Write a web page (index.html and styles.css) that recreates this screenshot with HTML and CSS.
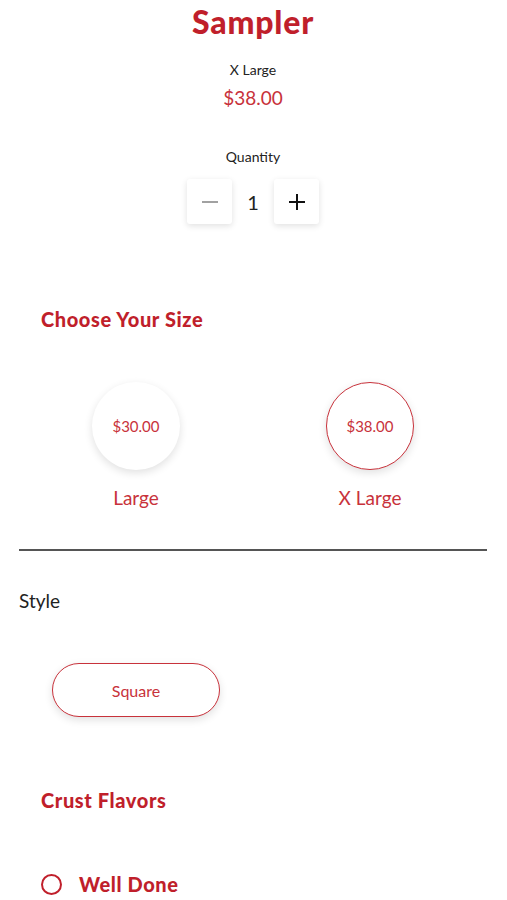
FILE: index.html
```html
<!DOCTYPE html>
<html lang="en">
<head>
    <meta charset="UTF-8">
    <meta name="viewport" content="width=device-width, initial-scale=1.0">
    <title>Sampler</title>
    <link rel="stylesheet" href="styles.css">
</head>
<body>
    <div class="product">
        <div class="summary">
            <h1>Sampler</h1>
            <div class="size-name">X Large</div>
            <div class="price">$38.00</div>
            <div class="qty-label">Quantity</div>
            <div class="qty">
                <button class="qty-btn minus" type="button" aria-label="Decrease">
                    <svg width="18" height="18" viewBox="0 0 18 18"><path d="M1 9h16" stroke="#8a8a8a" stroke-width="1.6"/></svg>
                </button>
                <span class="qty-value">1</span>
                <button class="qty-btn plus" type="button" aria-label="Increase">
                    <svg width="18" height="18" viewBox="0 0 18 18"><path d="M1 9h16M9 1v16" stroke="#111" stroke-width="2"/></svg>
                </button>
            </div>
        </div>

        <div class="section">
            <h2>Choose Your Size</h2>
            <div class="sizes">
                <div class="size">
                    <div class="size-circle">$30.00</div>
                    <div class="size-label">Large</div>
                </div>
                <div class="size">
                    <div class="size-circle selected">$38.00</div>
                    <div class="size-label">X Large</div>
                </div>
            </div>
        </div>

        <hr class="divider">

        <div class="style-group">
            <div class="style-title">Style</div>
            <button class="pill" type="button">Square</button>
        </div>

        <div class="section">
            <h2>Crust Flavors</h2>
            <label class="radio">
                <span class="radio-dot"></span>
                <span>Well Done</span>
            </label>
        </div>
    </div>
</body>
</html>
```

FILE: styles.css
```css
body {
    font-family: 'Lato', 'Noto Sans', sans-serif;
    margin: 0;
    padding: 0;
    background: #fff;
    color: #222;
}

.product {
    padding: 0 20px 0 19px;
}

.summary {
    display: flex;
    flex-direction: column;
    align-items: center;
}

h1 {
    margin: 4px 0 0;
    font-size: 32px;
    font-weight: 900;
    letter-spacing: 0.8px;
    color: #c01f2b;
    line-height: 36px;
}

.size-name {
    margin-top: 21px;
    font-size: 14px;
    line-height: 18px;
}

.price {
    margin-top: 8px;
    font-size: 19px;
    line-height: 22px;
    color: #c8323b;
}

.qty-label {
    margin-top: 39px;
    font-size: 14px;
    line-height: 18px;
}

.qty {
    display: flex;
    align-items: center;
    margin-top: 13px;
}

.qty-btn {
    width: 45px;
    height: 45px;
    border: none;
    background: #fff;
    border-radius: 3px;
    box-shadow: 0 2px 6px rgba(0, 0, 0, 0.12);
    padding: 0;
    display: flex;
    align-items: center;
    justify-content: center;
    cursor: pointer;
}

.qty-value {
    width: 42px;
    text-align: center;
    font-size: 20px;
}

.section {
    padding-left: 22px;
}

h2 {
    margin: 0;
    font-size: 20px;
    font-weight: 900;
    letter-spacing: 0.6px;
    color: #c01f2b;
    line-height: 24px;
}

.summary + .section {
    margin-top: 83px;
}

.summary + .section h2 {
    margin-bottom: 51px;
}

.sizes {
    display: grid;
    grid-template-columns: 1fr 1fr;
    margin-left: -22px;
}

.size {
    display: flex;
    flex-direction: column;
    align-items: center;
}

.size-circle {
    width: 88px;
    height: 88px;
    border-radius: 50%;
    display: flex;
    align-items: center;
    justify-content: center;
    box-sizing: border-box;
    background: #fff;
    box-shadow: 0 3px 8px rgba(0, 0, 0, 0.12);
    font-size: 15px;
    color: #c8323b;
}

.size-circle.selected {
    border: 1.5px solid #c8323b;
}

.size-label {
    margin-top: 16px;
    font-size: 19px;
    color: #c8323b;
}

.divider {
    margin: 40px 0 0;
    border: none;
    border-top: 2px solid #555;
}

.style-group {
    margin-top: 38px;
}

.style-title {
    font-size: 19px;
    line-height: 24px;
    color: #222;
}

.pill {
    margin: 50px 0 0 33px;
    width: 168px;
    height: 54px;
    border: 1.5px solid #c8323b;
    border-radius: 27px;
    background: #fff;
    box-shadow: 0 3px 8px rgba(0, 0, 0, 0.12);
    font-family: inherit;
    font-size: 16px;
    color: #c8323b;
    cursor: pointer;
}

.style-group + .section {
    margin-top: 71px;
}

.radio {
    display: flex;
    align-items: center;
    gap: 17px;
    margin-top: 60px;
    font-size: 20px;
    font-weight: 900;
    letter-spacing: 0.6px;
    color: #c01f2b;
}

.radio-dot {
    width: 21px;
    height: 21px;
    box-sizing: border-box;
    border: 2px solid #c01f2b;
    border-radius: 50%;
}
```
